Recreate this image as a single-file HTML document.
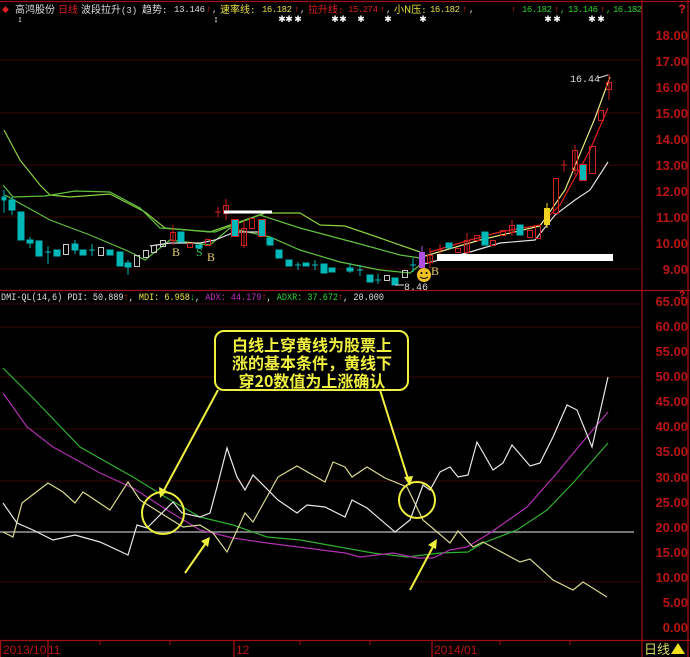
<!DOCTYPE html>
<html><head><meta charset="utf-8"><style>
html,body{margin:0;padding:0;background:#000;width:690px;height:657px;overflow:hidden}
svg{display:block}
.ax{font-family:"Liberation Sans",sans-serif;font-size:13px;font-weight:bold;fill:#b81414;text-anchor:end}
.c{font-family:"Noto Sans CJK SC",sans-serif;font-size:10px}
.n{font-family:"Liberation Mono",monospace;font-size:9px}
</style></head><body>
<svg width="690" height="657" viewBox="0 0 690 657" xmlns="http://www.w3.org/2000/svg">
<rect width="690" height="657" fill="#000"/>
<g stroke="#a01010" stroke-width="1.3" fill="none">
<line x1="0" y1="1.5" x2="690" y2="1.5"/>
<line x1="642" y1="0" x2="642" y2="657"/>
<line x1="688" y1="0" x2="688" y2="657"/>
<line x1="0" y1="290.5" x2="690" y2="290.5"/>
<line x1="0" y1="640.5" x2="690" y2="640.5"/>
<line x1="0.5" y1="640" x2="0.5" y2="657"/>
<line x1="48" y1="640" x2="48" y2="657"/>
<line x1="234" y1="640" x2="234" y2="657"/>
<line x1="432" y1="640" x2="432" y2="657"/>
</g>
<g stroke="#3a0808" stroke-width="1">
<line x1="0" y1="60" x2="642" y2="60"/><line x1="0" y1="113" x2="642" y2="113"/>
<line x1="0" y1="165" x2="642" y2="165"/><line x1="0" y1="217" x2="642" y2="217"/>
<line x1="0" y1="269" x2="642" y2="269"/><line x1="0" y1="304" x2="642" y2="304"/>
<line x1="0" y1="327" x2="642" y2="327"/><line x1="0" y1="377" x2="642" y2="377"/>
<line x1="0" y1="429" x2="642" y2="429"/><line x1="0" y1="481" x2="642" y2="481"/>
<line x1="0" y1="582" x2="642" y2="582"/>
</g>
<g class="ax">
<text x="688" y="40">18.00</text><text x="688" y="66">17.00</text><text x="688" y="92">16.00</text>
<text x="688" y="118">15.00</text><text x="688" y="144">14.00</text><text x="688" y="170">13.00</text>
<text x="688" y="196">12.00</text><text x="688" y="222">11.00</text><text x="688" y="248">10.00</text>
<text x="688" y="274">9.00</text>
<text x="688" y="306">65.00</text><text x="688" y="331">60.00</text><text x="688" y="356">55.00</text>
<text x="688" y="381">50.00</text><text x="688" y="406">45.00</text><text x="688" y="431">40.00</text>
<text x="688" y="456">35.00</text><text x="688" y="482">30.00</text><text x="688" y="507">25.00</text>
<text x="688" y="532">20.00</text><text x="688" y="557">15.00</text><text x="688" y="582">10.00</text>
<text x="688" y="607">5.00</text><text x="688" y="632">0.00</text>
</g>
<text x="682" y="13" fill="#e02020" font-family="Liberation Sans" font-weight="bold" font-size="12" text-anchor="middle">?</text>
<text x="682" y="298" fill="#e02020" font-family="Liberation Sans" font-weight="bold" font-size="10" text-anchor="middle">?</text>
<!-- header -->
<g>
<text x="2" y="12" fill="#e02020" font-size="9" font-family="Liberation Sans">◆</text>
<text class="c" x="15" y="13" fill="#ddd">高鸿股份</text>
<text class="c" x="58" y="13" fill="#e02020">日线</text>
<text class="c" x="81" y="13" fill="#ddd">波段拉升<tspan class="n">(3)</tspan></text>
<text class="c" x="142" y="13" fill="#ddd">趋势<tspan class="n">:</tspan></text>
<text class="n" x="174" y="12" fill="#ddd" textLength="31">13.146</text>
<text class="n" x="206" y="12" fill="#e02020">↑</text><text class="n" x="212" y="12" fill="#ddd">,</text>
<text class="c" x="220" y="13" fill="#e8e040">速率线<tspan class="n">:</tspan></text>
<text class="n" x="262" y="12" fill="#e8e040" textLength="30">16.182</text>
<text class="n" x="294" y="12" fill="#e02020">↑</text><text class="n" x="300" y="12" fill="#ddd">,</text>
<text class="c" x="308" y="13" fill="#e02020">拉升线<tspan class="n">:</tspan></text>
<text class="n" x="348" y="12" fill="#e02020" textLength="30">15.274</text>
<text class="n" x="380" y="12" fill="#e02020">↑</text><text class="n" x="386" y="12" fill="#ddd">,</text>
<text class="c" x="394" y="13" fill="#e8e040">小N压<tspan class="n">:</tspan></text>
<text class="n" x="430" y="12" fill="#e8e040" textLength="30">16.182</text>
<text class="n" x="462" y="12" fill="#e02020">↑</text><text class="n" x="469" y="12" fill="#ddd">,</text>
<text class="n" x="511" y="12" fill="#e02020">↑</text>
<text class="n" x="522" y="12" fill="#30d030" textLength="30">16.182</text>
<text class="n" x="554" y="12" fill="#e02020">↑</text><text class="n" x="560" y="12" fill="#30d030">,</text>
<text class="n" x="568" y="12" fill="#30d030" textLength="30">13.146</text>
<text class="n" x="600" y="12" fill="#e02020">↑</text><text class="n" x="606" y="12" fill="#30d030">,</text>
<text class="n" x="613" y="12" fill="#30d030" textLength="29">16.182</text>
</g>
<g fill="#fff" font-family="Liberation Sans" font-size="9" text-anchor="middle">
<text x="20" y="22">↕</text><text x="216" y="22">↕</text>
<text x="282" y="22">✱</text><text x="289" y="22">✱</text><text x="298" y="22">✱</text>
<text x="335" y="22">✱</text><text x="343" y="22">✱</text><text x="361" y="22">✱</text>
<text x="388" y="22">✱</text><text x="423" y="22">✱</text>
<text x="548" y="22">✱</text><text x="557" y="22">✱</text><text x="592" y="22">✱</text><text x="601" y="22">✱</text>
</g>
<g fill="none" stroke-width="1.2">
<polyline stroke="#8ad040" points="4,130 20,160 40,185 50,195 70,197 110,194 145,212 165,228 210,232 265,213 300,213 320,225 345,226 380,238 420,252"/>
<polyline stroke="#60c040" points="3,185 13,197 45,196 75,191 110,192 140,208 160,228 215,232 260,215 300,228 330,236 360,244 400,255 420,258"/>
<polyline stroke="#60c040" points="5,195 50,220 90,235 130,252 145,260 170,240 210,245 230,228 270,237 300,250 340,262 380,270 410,273 420,265"/>
<polyline stroke="#e0e0e0" points="150,246 170,243 200,243 215,240 235,232 262,232"/>
<polyline stroke="#e0e0e0" points="420,265 470,252 500,243 535,240 555,215 575,200 590,190 608,162"/>
<polyline stroke="#e02020" points="430,252 470,240 500,232 540,225 560,205 590,150 608,108"/>
<polyline stroke="#e8e880" points="425,256 480,240 540,226 565,190 595,118 610,77"/>
</g>
<g stroke-width="1">
<g fill="#00b8b8" stroke="#00b8b8">
<line x1="4" y1="190" x2="4" y2="213"/><rect x="2" y="197" width="4" height="3"/>
<line x1="12" y1="197" x2="12" y2="215"/><rect x="9" y="200" width="6" height="10"/>
<rect x="18" y="212" width="6" height="28"/>
<line x1="30" y1="237" x2="30" y2="248"/><rect x="27" y="240" width="6" height="3"/>
<rect x="36" y="241" width="6" height="15"/>
<line x1="48" y1="246" x2="48" y2="264"/><line x1="45" y1="252" x2="51" y2="252"/>
<rect x="54" y="250" width="6" height="6"/>
<line x1="75" y1="240" x2="75" y2="254"/><rect x="72" y="244" width="6" height="6"/>
<rect x="80" y="250" width="6" height="5"/>
<line x1="92" y1="244" x2="92" y2="256"/><line x1="89" y1="250" x2="95" y2="250"/>
<rect x="107" y="250" width="6" height="5"/>
<rect x="117" y="252" width="6" height="14"/>
<line x1="128" y1="260" x2="128" y2="275"/><rect x="125" y="263" width="6" height="4"/>
<rect x="178" y="232" width="6" height="10"/>
<rect x="196" y="245" width="6" height="3"/>
<rect x="232" y="220" width="6" height="16"/>
<rect x="259" y="220" width="6" height="16"/>
<rect x="267" y="238" width="6" height="7"/>
<rect x="276" y="250" width="6" height="8"/>
<rect x="286" y="260" width="6" height="6"/>
<line x1="298" y1="262" x2="298" y2="270"/><line x1="295" y1="265" x2="301" y2="265"/>
<rect x="303" y="263" width="6" height="3"/>
<line x1="315" y1="260" x2="315" y2="270"/><line x1="312" y1="265" x2="318" y2="265"/>
<rect x="321" y="264" width="6" height="9"/>
<rect x="329" y="268" width="6" height="4"/>
<line x1="350" y1="263" x2="350" y2="273"/><rect x="347" y="268" width="6" height="3"/>
<line x1="360" y1="265" x2="360" y2="276"/><line x1="357" y1="270" x2="363" y2="270"/>
<rect x="367" y="275" width="6" height="7"/>
<line x1="378" y1="274" x2="378" y2="284"/><line x1="375" y1="280" x2="381" y2="280"/>
<rect x="392" y="278" width="6" height="7"/>
<line x1="413" y1="258" x2="413" y2="272"/><line x1="410" y1="265" x2="416" y2="265"/>
<rect x="446" y="243" width="6" height="5"/>
<rect x="482" y="232" width="6" height="13"/>
<rect x="517" y="225" width="6" height="10"/>
<rect x="580" y="165" width="6" height="15"/>
</g>
<g fill="none" stroke="#c8c8c8">
<rect x="63.5" y="244.5" width="5" height="10"/><rect x="98.5" y="247.5" width="5" height="8"/>
<rect x="134.5" y="255.5" width="5" height="11"/><rect x="143.5" y="250.5" width="5" height="7"/>
<rect x="151.5" y="245.5" width="5" height="7"/><rect x="160.5" y="240.5" width="5" height="6"/>
<rect x="384.5" y="275.5" width="5" height="5"/><rect x="402.5" y="270.5" width="5" height="7"/>
</g>
<g fill="none" stroke="#d02020">
<line x1="173" y1="225" x2="173" y2="245"/><rect x="170.5" y="232.5" width="5" height="8"/>
<rect x="187.5" y="243.5" width="5" height="4"/><rect x="205.5" y="239.5" width="5" height="6"/>
<line x1="218" y1="207" x2="218" y2="217"/><line x1="215" y1="212" x2="221" y2="212"/>
<line x1="226" y1="199" x2="226" y2="220"/><rect x="223.5" y="205.5" width="5" height="8"/>
<rect x="231.5" y="219.5" width="7" height="17"/><rect x="258.5" y="219.5" width="7" height="17"/>
<line x1="244" y1="220" x2="244" y2="248"/><rect x="241.5" y="228.5" width="5" height="17"/>
<rect x="249.5" y="218.5" width="5" height="10"/>
<line x1="430" y1="248" x2="430" y2="268"/><rect x="427.5" y="255.5" width="5" height="7"/>
<line x1="440" y1="244" x2="440" y2="256"/><line x1="437" y1="250" x2="443" y2="250"/>
<rect x="455.5" y="248.5" width="5" height="4"/>
<line x1="467" y1="233" x2="467" y2="258"/><rect x="464.5" y="240.5" width="5" height="12"/>
<rect x="474.5" y="235.5" width="5" height="5"/>
<rect x="490.5" y="240.5" width="5" height="5"/>
<rect x="500.5" y="230.5" width="5" height="5"/>
<line x1="512" y1="220" x2="512" y2="236"/><rect x="509.5" y="225.5" width="5" height="7"/>
<rect x="527.5" y="230.5" width="5" height="7"/>
<rect x="535.5" y="225.5" width="5" height="13"/>
<rect x="553.5" y="178.5" width="5" height="35"/>
<line x1="564" y1="160" x2="564" y2="172"/><line x1="561" y1="165" x2="567" y2="165"/>
<line x1="575" y1="145" x2="575" y2="175"/><rect x="572.5" y="150.5" width="5" height="20"/>
<rect x="579.5" y="164.5" width="7" height="16"/>
<rect x="589.5" y="146.5" width="6" height="27"/>
<rect x="598.5" y="110.5" width="5" height="10"/>
<line x1="609" y1="74" x2="609" y2="100"/><rect x="606.5" y="82.5" width="5" height="7"/>
</g>
<line x1="547" y1="203" x2="547" y2="228" stroke="#f0d020"/><rect x="544" y="208" width="6" height="17" fill="#f0d020"/>
<line x1="422" y1="246" x2="422" y2="272" stroke="#b050e0"/><rect x="419" y="252" width="6" height="16" fill="#b050e0"/>
</g>
<line x1="224" y1="212" x2="272" y2="212" stroke="#fff" stroke-width="3"/>
<rect x="437" y="254" width="176" height="7" fill="#fff"/>
<text x="570" y="82" fill="#ddd" font-family="Liberation Mono" font-size="10">16.44</text>
<line x1="598" y1="78" x2="608" y2="75" stroke="#ddd"/>
<text x="404" y="290" fill="#ddd" font-family="Liberation Mono" font-size="10">8.46</text>
<line x1="395" y1="285" x2="404" y2="285" stroke="#ddd"/>
<g font-family="Liberation Serif" font-size="12" fill="#e8d070">
<text x="172" y="256">B</text><text x="207" y="261">B</text><text x="431" y="275">B</text></g>
<text x="196" y="256" font-family="Liberation Serif" font-size="12" fill="#30c060">S</text>
<circle cx="424" cy="275" r="7" fill="#f0c020"/>
<circle cx="421.5" cy="273" r="1" fill="#000"/><circle cx="426.5" cy="273" r="1" fill="#000"/>
<path d="M420 277 Q424 280 428 277" stroke="#000" fill="none"/>
<text x="1" y="300" fill="#ddd" font-family="Liberation Mono" font-size="10" textLength="383" lengthAdjust="spacingAndGlyphs">DMI-QL(14,6) PDI: 50.889<tspan fill="#e02020">↑</tspan>, <tspan fill="#e8e040">MDI: 6.958</tspan><tspan fill="#30d030">↓</tspan>, <tspan fill="#c030c0">ADX: 44.179</tspan><tspan fill="#e02020">↑</tspan>, <tspan fill="#30d030">ADXR: 37.672</tspan><tspan fill="#e02020">↑</tspan>, 20.000</text>
<line x1="0" y1="532" x2="634" y2="532" stroke="#9a9a9a" stroke-width="1.5"/>
<g fill="none" stroke-width="1.2">
<polyline stroke="#30b030" points="3,368 33,398 80,447 133,477 167,498 200,517 233,525 267,537 300,540 345,548 373,553 407,557 440,553 468,552 483,543 517,530 547,510 573,483 608,443"/>
<polyline stroke="#b030b0" points="3,393 27,427 53,447 100,473 133,488 167,510 200,530 233,538 267,543 345,553 360,557 393,553 417,558 433,558 450,550 467,547 490,533 527,507 557,473 580,445 608,412"/>
<polyline stroke="#d8d890" points="3,532 13,537 22,503 48,483 63,492 75,503 83,492 110,510 128,482 140,500 167,517 183,527 200,525 213,533 227,552 245,513 253,522 278,477 297,466 325,482 333,462 345,467 352,477 367,467 385,478 407,487 423,520 450,543 458,531 473,547 483,542 520,562 530,559 553,580 573,590 583,582 607,597"/>
<polyline stroke="#e8e8e8" points="3,503 17,523 33,530 53,540 75,535 100,542 128,555 137,525 147,528 173,502 182,513 200,517 210,513 217,487 227,448 237,477 245,490 253,475 278,500 297,513 307,505 325,507 345,517 352,500 367,508 395,532 410,520 423,485 430,490 440,472 450,467 458,477 468,475 477,442 493,470 503,463 512,445 530,466 540,463 553,437 567,405 577,410 592,447 608,377"/>
</g>
<g stroke="#f0f040" stroke-width="2" fill="none">
<circle cx="163" cy="513" r="21"/>
<circle cx="417" cy="500" r="18"/>
<line x1="218" y1="390" x2="162" y2="494"/>
<line x1="380" y1="390" x2="409" y2="482"/>
<line x1="185" y1="573" x2="208" y2="540"/>
<line x1="410" y1="590" x2="435" y2="543"/>
</g>
<g fill="#f0f040">
<polygon points="160,498 159,487 167,491"/>
<polygon points="410,486 404,477 413,476"/>
<polygon points="210,537 201,541 208,547"/>
<polygon points="437,539 428,545 436,549"/>
</g>
<rect x="215" y="331" width="193" height="59" rx="9" fill="#000" stroke="#f0f040" stroke-width="2"/>
<g font-family="'Noto Sans CJK SC',sans-serif" font-size="16" font-weight="bold" fill="#f0f040" text-anchor="middle">
<text x="312" y="351">白线上穿黄线为股票上</text>
<text x="312" y="369">涨的基本条件，黄线下</text>
<text x="312" y="387">穿20数值为上涨确认</text>
</g>
<g font-family="Liberation Sans" font-size="12" fill="#b81414">
<text x="3" y="654">2013/10</text><text x="48" y="654">11</text>
<text x="236" y="654">12</text><text x="434" y="654">2014/01</text>
</g>
<g stroke="#a01010"><line x1="100" y1="641" x2="100" y2="645"/><line x1="170" y1="641" x2="170" y2="645"/><line x1="300" y1="641" x2="300" y2="645"/><line x1="370" y1="641" x2="370" y2="645"/><line x1="500" y1="641" x2="500" y2="645"/><line x1="570" y1="641" x2="570" y2="645"/></g>
<text x="644" y="654" font-family="'Noto Sans CJK SC',sans-serif" font-size="13" fill="#d8d860">日线</text>
<polygon points="671,654 678,643 685,654" fill="#f0e020"/>
</svg>
</body></html>
